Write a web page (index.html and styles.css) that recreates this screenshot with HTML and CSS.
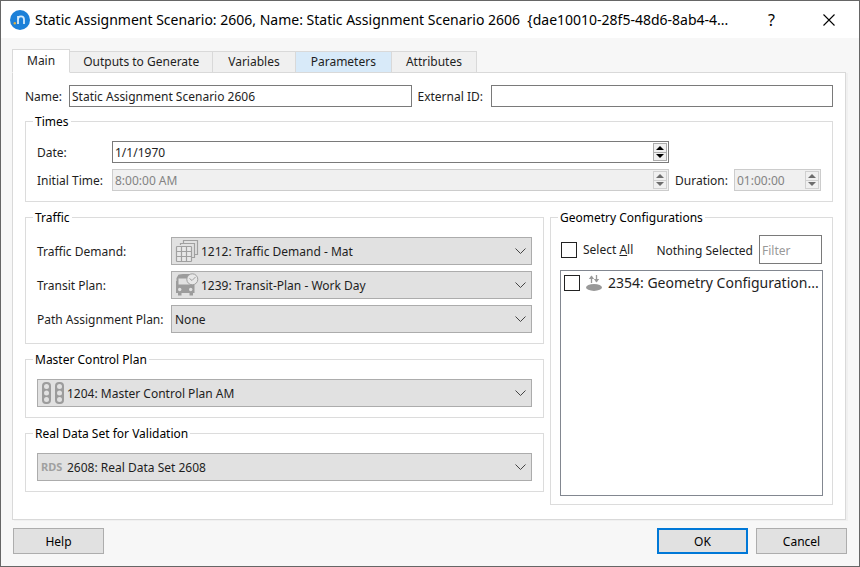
FILE: index.html
```html
<!DOCTYPE html>
<html lang="en">
<head>
<meta charset="utf-8">
<title>Static Assignment Scenario: 2606</title>
<link rel="stylesheet" href="styles.css">
</head>
<body>
<div class="window">
  <header class="titlebar">
    <svg class="app-icon" width="20" height="20" viewBox="0 0 20 20" aria-hidden="true">
      <circle cx="10" cy="10" r="10" fill="#1c80d8"/>
      <path d="M8 14V6M8 9.500C8 7.500 9.300 6.300 11 6.300S14 7.500 14 9.500V14" fill="none" stroke="#d6ebfb" stroke-width="1.800"/>
      <circle cx="4.800" cy="13.200" r="1.200" fill="#e0b040"/>
    </svg>
    <h1 class="title">Static Assignment Scenario: 2606, Name: Static Assignment Scenario 2606&nbsp; {dae10010-28f5-48d6-8ab4-4...</h1>
    <button class="caption-button" type="button" aria-label="Help">?</button>
    <button class="caption-button" type="button" aria-label="Close">
      <svg width="12" height="12" viewBox="0 0 12 12"><path d="M.5 .5l11 11M11.500 .5l-11 11" stroke="#000" stroke-width="1.100"/></svg>
    </button>
  </header>

  <main class="body">
    <div class="tabs" role="tablist">
      <button class="tab tab-active" type="button" role="tab" aria-selected="true">Main</button>
      <button class="tab tab-tight" type="button" role="tab">Outputs to Generate</button>
      <button class="tab tab-wide" type="button" role="tab">Variables</button>
      <button class="tab tab-wide tab-hover" type="button" role="tab">Parameters</button>
      <button class="tab" type="button" role="tab">Attributes</button>
    </div>

    <form class="pane" id="scenario">
      <div class="name-row">
        <label for="name">Name:</label>
        <input class="field" id="name" type="text" value="Static Assignment Scenario 2606">
        <label for="external-id">External ID:</label>
        <input class="field" id="external-id" type="text">
      </div>

      <fieldset class="group">
        <legend>Times</legend>
        <div class="times">
          <label for="date">Date:</label>
          <div class="spin">
            <input id="date" type="text" value="1/1/1970">
            <div class="spin-buttons">
              <button type="button" aria-label="Later date"><svg width="8" height="4" viewBox="0 0 8 4"><path d="M0 4L4 0L8 4z"/></svg></button>
              <button type="button" aria-label="Earlier date"><svg width="8" height="4" viewBox="0 0 8 4"><path d="M0 0L4 4L8 0z"/></svg></button>
            </div>
          </div>
          <label class="row-start" for="initial-time">Initial Time:</label>
          <div class="spin spin-disabled">
            <input id="initial-time" type="text" value="8:00:00 AM" disabled>
            <div class="spin-buttons">
              <button type="button" aria-label="Later time" disabled><svg width="8" height="4" viewBox="0 0 8 4"><path d="M0 4L4 0L8 4z"/></svg></button>
              <button type="button" aria-label="Earlier time" disabled><svg width="8" height="4" viewBox="0 0 8 4"><path d="M0 0L4 4L8 0z"/></svg></button>
            </div>
          </div>
          <label for="duration">Duration:</label>
          <div class="spin spin-disabled">
            <input id="duration" type="text" value="01:00:00" disabled>
            <div class="spin-buttons">
              <button type="button" aria-label="Longer" disabled><svg width="8" height="4" viewBox="0 0 8 4"><path d="M0 4L4 0L8 4z"/></svg></button>
              <button type="button" aria-label="Shorter" disabled><svg width="8" height="4" viewBox="0 0 8 4"><path d="M0 0L4 4L8 0z"/></svg></button>
            </div>
          </div>
        </div>
      </fieldset>

      <div class="columns">
        <div class="plans">
          <fieldset class="group">
            <legend>Traffic</legend>
            <div class="traffic">
              <label for="demand">Traffic Demand:</label>
              <div class="combo combo-icon">
                <select id="demand"><option>1212: Traffic Demand - Mat</option></select>
                <svg class="item-icon" width="24" height="24" viewBox="0 0 24 24" fill="none" stroke="#a0a0a0" stroke-width="1.200" aria-hidden="true">
                  <path d="M5.500 6V4.500H19.500V18.500H17M8.500 4V1.500H22.500V15.500H20"/>
                  <rect x="1.500" y="7.500" width="15" height="15" rx=".8" fill="#e8e8e8"/>
                  <path d="M6.500 8v15M11.500 8v15M2 12.500h15M2 17.500h15"/>
                </svg>
                <svg class="chevron" width="11" height="6" viewBox="0 0 11 6"><path d="M.5 .5l5 5l5-5"/></svg>
              </div>
              <label for="transit">Transit Plan:</label>
              <div class="combo combo-icon">
                <select id="transit"><option>1239: Transit-Plan - Work Day</option></select>
                <svg class="item-icon" width="24" height="24" viewBox="0 0 24 24" aria-hidden="true">
                  <path d="M3 2.500Q3 1 8 1H15V11H19.500V20H18V22.500H14.500V20H6.500V22.500H3V20H1V8H1.500V5Z" fill="#9c9c9c"/>
                  <path d="M3.500 5.500H15V11.500H3.500z" fill="#e1e1e1"/>
                  <circle cx="4.700" cy="16.500" r="1.700" fill="#e1e1e1"/><circle cx="15.700" cy="16.500" r="1.700" fill="#e1e1e1"/>
                  <circle cx="17.300" cy="6.300" r="5.500" fill="#e8e8e8" stroke="#a0a0a0"/>
                  <path d="M14.500 5.500l2.500 2 3.500-3.500" fill="none" stroke="#a0a0a0"/>
                </svg>
                <svg class="chevron" width="11" height="6" viewBox="0 0 11 6"><path d="M.5 .5l5 5l5-5"/></svg>
              </div>
              <label for="path-plan">Path Assignment Plan:</label>
              <div class="combo">
                <select id="path-plan"><option>None</option></select>
                <svg class="chevron" width="11" height="6" viewBox="0 0 11 6"><path d="M.5 .5l5 5l5-5"/></svg>
              </div>
            </div>
          </fieldset>

          <fieldset class="group">
            <legend>Master Control Plan</legend>
            <div class="combo combo-icon">
              <select aria-label="Master Control Plan"><option>1204: Master Control Plan AM</option></select>
              <svg class="item-icon" width="24" height="24" viewBox="0 0 24 24" aria-hidden="true">
                <rect x="1" y="1" width="9" height="22" rx="4" fill="#9c9c9c"/>
                <rect x="14" y="1" width="9" height="22" rx="4" fill="#9c9c9c"/>
                <g fill="#e1e1e1"><circle cx="5.500" cy="5.500" r="2.500"/><circle cx="5.500" cy="12" r="2.500"/><circle cx="5.500" cy="18.500" r="2.500"/><circle cx="18.500" cy="5.500" r="2.500"/><circle cx="18.500" cy="12" r="2.500"/><circle cx="18.500" cy="18.500" r="2.500"/></g>
              </svg>
              <svg class="chevron" width="11" height="6" viewBox="0 0 11 6"><path d="M.5 .5l5 5l5-5"/></svg>
            </div>
          </fieldset>

          <fieldset class="group">
            <legend>Real Data Set for Validation</legend>
            <div class="combo combo-icon">
              <select aria-label="Real Data Set for Validation"><option>2608: Real Data Set 2608</option></select>
              <span class="item-icon item-text" aria-hidden="true">RDS</span>
              <svg class="chevron" width="11" height="6" viewBox="0 0 11 6"><path d="M.5 .5l5 5l5-5"/></svg>
            </div>
          </fieldset>
        </div>

        <fieldset class="group geometry">
          <legend>Geometry Configurations</legend>
          <div class="geometry-content">
            <div class="geometry-bar">
              <label class="select-all"><input class="check" type="checkbox"><span>Select <u>A</u>ll</span></label>
              <span class="selection">Nothing Selected</span>
              <input class="field filter" type="text" placeholder="Filter" aria-label="Filter">
            </div>
            <ul class="list">
              <li>
                <label class="list-item">
                  <input class="check" type="checkbox">
                  <svg width="16" height="16" viewBox="0 0 16 16" aria-hidden="true">
                    <ellipse cx="8" cy="12.400" rx="8" ry="3.500" fill="#999"/>
                    <path d="M5.500 8V1M10.500 0V7" stroke="#999" stroke-width="1.300"/>
                    <path d="M2.800 4L5.500 .5L8.200 4zM7.800 4L10.500 7.500L13.200 4z" fill="#999"/>
                  </svg>
                  <span>2354: Geometry Configuration...</span>
                </label>
              </li>
            </ul>
          </div>
        </fieldset>
      </div>
    </form>

    <footer class="actions">
      <button class="button" type="button">Help</button>
      <button class="button button-default" type="submit" form="scenario">OK</button>
      <button class="button" type="button">Cancel</button>
    </footer>
  </main>
</div>
</body>
</html>
```
FILE: styles.css
```css
* { box-sizing: border-box; }

body {
  margin: 0;
  color: #1e1e1e;
  font: 12px/16px "Noto Sans", sans-serif;
}

input, select, button { font: inherit; color: inherit; border-radius: 0; }
label, .selection { padding-top: 2px; }
svg { display: block; flex: none; }

.window {
  display: flex;
  flex-direction: column;
  min-height: 100vh;
  border: 1px solid #666;
  background: #f7f7f7;
}

/* Title bar */
.titlebar {
  display: flex;
  align-items: center;
  height: 37px;
  padding-left: 9px;
  background: #fff;
  color: #000;
}
.title {
  flex: 1;
  min-width: 0;
  margin: 0 0 0 5px;
  overflow: hidden;
  font: 14px/20px "Noto Sans", sans-serif;
  white-space: nowrap;
}
.caption-button {
  display: flex;
  align-items: center;
  justify-content: center;
  width: 57px;
  height: 36px;
  padding: 0;
  border: 0;
  background: none;
  font: 16px/20px "Noto Sans", sans-serif;
}
.caption-button:last-child { margin-right: 2px; }

.body {
  display: flex;
  flex: 1;
  flex-direction: column;
  padding: 11px 12px 12px 11px;
}

/* Tabs */
.tabs {
  display: flex;
  align-items: flex-end;
  height: 24px;
  margin-bottom: -1px;
}
.tab {
  height: 22px;
  margin-left: -1px;
  padding: 0 14px;
  border: 1px solid #d9d9d9;
  background: #f0f0f0;
}
.tab-tight { padding: 0 13px; }
.tab-wide { padding: 0 15px; }
.tab-active {
  z-index: 1;
  height: 24px;
  margin-left: 0;
  border-bottom-color: #fff;
  background: #fff;
}
.tab-hover { background: #d8eaf9; }

.pane {
  display: flex;
  flex: 1;
  flex-direction: column;
  gap: 7px;
  margin-right: 1px;
  padding: 12px 12px 14px;
  border: 1px solid #d9d9d9;
  background: #fff;
  box-shadow: 2px 1px 0 #f0f0f0;
}

.name-row {
  display: grid;
  grid-template-columns: 38px 1fr 67px 1fr;
  gap: 6px;
  align-items: center;
  margin-bottom: -1px;
}
.field {
  width: 100%;
  min-width: 0;
  height: 22px;
  padding: 1px 2px 0;
  border: 1px solid #7a7a7a;
  background: #fff;
}

/* Group boxes */
.group {
  min-width: 0;
  margin: 0;
  padding: 12px 11px 10px;
  border: 1px solid #dcdcdc;
}
.group legend {
  height: 16px;
  margin-left: -4px;
  padding: 1px 2px 0;
  color: #000;
}

/* Times */
.times {
  display: grid;
  grid-template-columns: 69px 1fr auto 87px;
  gap: 6px;
  align-items: center;
}
.row-start { grid-column-start: 1; }
.spin {
  display: flex;
  height: 22px;
  padding: 1px;
  border: 1px solid #7a7a7a;
  background: #fff;
}
.spin input {
  flex: 1;
  width: 0;
  min-width: 0;
  padding: 2px 1px 0;
  border: 0;
  background: none;
}
.spin-buttons {
  display: flex;
  flex-direction: column;
  width: 14px;
}
.spin-buttons button {
  display: flex;
  flex: 1;
  align-items: center;
  justify-content: center;
  padding: 0;
  border: 1px solid #acacac;
  background: #f0f0f0;
}
.spin-buttons button + button { margin-top: -1px; }
.spin-disabled {
  border-color: #ccc;
  background: #f0f0f0;
  color: #838383;
}
.spin-disabled .spin-buttons button { border-color: #d0d0d0; }
.spin-disabled svg { fill: #6d6d6d; }

/* Two-column area */
.columns {
  display: grid;
  flex: 1;
  grid-template-columns: 519fr 283fr;
  gap: 6px;
}
.plans {
  display: flex;
  flex-direction: column;
  gap: 7px;
  min-width: 0;
}
.traffic {
  display: grid;
  grid-template-columns: 134px 1fr;
  row-gap: 6px;
  align-items: center;
}

/* Drop-downs */
.combo { position: relative; }
.combo select {
  display: block;
  width: 100%;
  height: 28px;
  padding: 2px 24px 0 3px;
  border: 1px solid #acacac;
  background: #e1e1e1;
  appearance: none;
}
.combo-icon select { padding-left: 29px; }
.item-icon {
  position: absolute;
  top: 2px;
  left: 4px;
  pointer-events: none;
}
.item-text {
  color: #a0a0a0;
  font: bold 11px/24px "Noto Sans", sans-serif;
}
.chevron {
  position: absolute;
  top: 11px;
  right: 6px;
  fill: none;
  stroke: #444;
  pointer-events: none;
}

/* Geometry configurations */
.geometry {
  display: flex;
  flex-direction: column;
  padding: 10px 9px 8px;
}
.geometry legend { margin-left: -2px; }
.geometry-content {
  display: flex;
  flex: 1;
  flex-direction: column;
  gap: 6px;
}
.geometry-bar {
  display: flex;
  align-items: center;
  padding-right: 1px;
}
.select-all {
  display: flex;
  gap: 6px;
  align-items: center;
  padding: 0;
}
.check {
  flex: none;
  width: 16px;
  height: 16px;
  margin: 0 0 0 1px;
  border: 1px solid #222;
  background: #fff;
  appearance: none;
}
.selection { margin-left: auto; }
.filter {
  width: 63px;
  height: 29px;
  margin-left: 6px;
}
.filter::placeholder { color: #999; }
.list {
  flex: 1;
  margin: 0;
  padding: 2px;
  border: 1px solid #828790;
  list-style: none;
}
.list-item {
  display: flex;
  gap: 6px;
  align-items: center;
  height: 20px;
  padding: 0;
  font: 14px/20px "Noto Sans", sans-serif;
  white-space: nowrap;
}

/* Footer */
.actions {
  display: flex;
  gap: 8px;
  padding: 8px 0 0 1px;
}
.button {
  width: 91px;
  height: 26px;
  padding: 2px 0 0;
  border: 1px solid #adadad;
  background: #e1e1e1;
  color: #000;
}
.button-default {
  margin-left: auto;
  border: 2px solid #0078d7;
}
```
